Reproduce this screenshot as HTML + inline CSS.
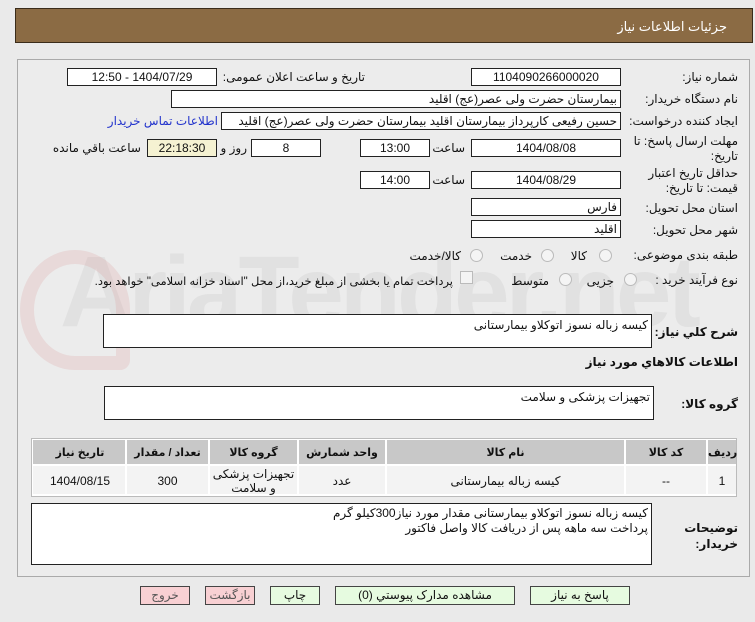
<!DOCTYPE html>
<html><head><meta charset="utf-8"><style>
body{margin:0;width:755px;height:622px;background:#eaeaea;font-family:"Liberation Sans","DejaVu Sans",sans-serif;font-size:12px;color:#111;position:relative;overflow:hidden}
.a{position:absolute}
.box{position:absolute;background:#fff;border:1px solid #222;box-sizing:border-box;height:18px;line-height:16px;text-align:center;direction:rtl;white-space:nowrap;overflow:hidden}
.r{text-align:right;padding-right:3px}
.l{position:absolute;direction:rtl;white-space:nowrap;text-align:right}
.rad{position:absolute;width:11px;height:11px;border:1px solid #bbb;border-radius:50%;background:#f4f4f4}
.btn{position:absolute;height:19px;top:586px;border:1px solid #444;box-sizing:border-box;text-align:center;line-height:17px;direction:rtl}
.g{background:#e6fbe0}.p{background:#f8d0d3;color:#555}
</style></head><body>
<div class="a" style="left:15px;top:8px;width:738px;height:35px;background:#8b6b44;border:1px solid #3a2c1a;box-sizing:border-box"></div>
<div class="l" style="right:28px;top:19px;color:#fff;font-size:13px">جزئیات اطلاعات نیاز</div>
<div class="a" style="left:17px;top:59px;width:733px;height:518px;border:1px solid #aaa;box-sizing:border-box;background:#ececec"></div>
<div class="a" style="left:60px;top:235px;font-size:100px;font-weight:bold;color:rgba(180,180,180,0.18);letter-spacing:-4px">AriaTender.net</div>
<div class="a" style="left:20px;top:250px;width:110px;height:120px;border:14px solid rgba(220,150,150,0.22);border-radius:50% 50% 10px 50%;box-sizing:border-box"></div>

<div class="l" style="right:17px;top:70px">شماره نیاز:</div>
<div class="box" style="left:471px;top:68px;width:150px">1104090266000020</div>
<div class="l" style="right:390px;top:70px">تاریخ و ساعت اعلان عمومی:</div>
<div class="box" style="left:67px;top:68px;width:150px">1404/07/29 - 12:50</div>

<div class="l" style="right:17px;top:92px">نام دستگاه خریدار:</div>
<div class="box r" style="left:171px;top:90px;width:450px">بیمارستان حضرت ولی عصر(عج) اقلید</div>

<div class="l" style="right:17px;top:114px">ایجاد کننده درخواست:</div>
<div class="box r" style="left:221px;top:112px;width:400px">حسین رفیعی کارپرداز بیمارستان اقلید بیمارستان حضرت ولی عصر(عج) اقلید</div>
<div class="l" style="right:537px;top:114px;color:#2233cc">اطلاعات تماس خریدار</div>

<div class="l" style="right:17px;top:134px;line-height:15px">مهلت ارسال پاسخ: تا<br>تاریخ:</div>
<div class="box" style="left:471px;top:139px;width:150px">1404/08/08</div>
<div class="l" style="right:290px;top:141px">ساعت</div>
<div class="box" style="left:360px;top:139px;width:70px">13:00</div>
<div class="box" style="left:251px;top:139px;width:70px">8</div>
<div class="l" style="right:508px;top:141px">روز و</div>
<div class="box" style="left:147px;top:139px;width:70px;background:#f5f2d2">22:18:30</div>
<div class="l" style="right:614px;top:141px">ساعت باقي مانده</div>

<div class="l" style="right:17px;top:166px;line-height:15px">حداقل تاریخ اعتبار<br>قیمت: تا تاریخ:</div>
<div class="box" style="left:471px;top:171px;width:150px">1404/08/29</div>
<div class="l" style="right:290px;top:173px">ساعت</div>
<div class="box" style="left:360px;top:171px;width:70px">14:00</div>

<div class="l" style="right:17px;top:201px">استان محل تحویل:</div>
<div class="box r" style="left:471px;top:198px;width:150px">فارس</div>
<div class="l" style="right:17px;top:223px">شهر محل تحویل:</div>
<div class="box r" style="left:471px;top:220px;width:150px">اقلید</div>

<div class="l" style="right:17px;top:248px">طبقه بندی موضوعی:</div>
<div class="rad" style="left:599px;top:249px"></div><div class="l" style="right:168px;top:249px">کالا</div>
<div class="rad" style="left:541px;top:249px"></div><div class="l" style="right:223px;top:249px">خدمت</div>
<div class="rad" style="left:470px;top:249px"></div><div class="l" style="right:294px;top:249px">کالا/خدمت</div>

<div class="l" style="right:17px;top:273px">نوع فرآیند خرید :</div>
<div class="rad" style="left:624px;top:273px"></div><div class="l" style="right:141px;top:274px">جزیی</div>
<div class="rad" style="left:559px;top:273px"></div><div class="l" style="right:206px;top:274px">متوسط</div>
<div class="a" style="left:460px;top:271px;width:11px;height:11px;border:1px solid #bbb;background:#f4f4f4"></div>
<div class="l" style="right:302px;top:274px;font-size:11.5px">پرداخت تمام یا بخشی از مبلغ خرید،از محل "اسناد خزانه اسلامی" خواهد بود.</div>

<div class="l" style="right:17px;top:325px;font-weight:bold">شرح کلي نیاز:</div>
<div class="box r" style="left:103px;top:314px;width:549px;height:34px;text-align:right;padding-top:2px">کیسه زباله نسوز اتوکلاو بیمارستانی</div>
<div class="l" style="right:17px;top:355px;font-weight:bold">اطلاعات کالاهاي مورد نیاز</div>
<div class="l" style="right:17px;top:397px;font-weight:bold">گروه کالا:</div>
<div class="box r" style="left:104px;top:386px;width:550px;height:34px;text-align:right;padding-top:2px">تجهیزات پزشکی و سلامت</div>

<div class="a" style="left:31px;top:438px;width:706px;height:59px;border:1px solid #bbb;box-sizing:border-box;background:#fff"></div>
<div class="a" style="left:33px;top:440px;width:703px;height:25px;background:#c8c8c8"></div>
<div class="a" style="left:33px;top:466px;width:703px;height:28px;background:#f3f3f3"></div>
<div class="a" style="left:706px;top:440px;width:2px;height:55px;background:#fff"></div>
<div class="a" style="left:624px;top:440px;width:2px;height:55px;background:#fff"></div>
<div class="a" style="left:385px;top:440px;width:2px;height:55px;background:#fff"></div>
<div class="a" style="left:297px;top:440px;width:2px;height:55px;background:#fff"></div>
<div class="a" style="left:208px;top:440px;width:2px;height:55px;background:#fff"></div>
<div class="a" style="left:125px;top:440px;width:2px;height:55px;background:#fff"></div>
<div class="a" style="left:33px;top:464px;width:703px;height:2px;background:#fff"></div>
<div class="a" style="font-weight:bold;top:446px;left:708px;width:28px;text-align:center;font-size:11px">ردیف</div>
<div class="a" style="font-weight:bold;top:446px;left:626px;width:80px;text-align:center;font-size:11px">کد کالا</div>
<div class="a" style="font-weight:bold;top:446px;left:387px;width:237px;text-align:center;font-size:11px">نام کالا</div>
<div class="a" style="font-weight:bold;top:446px;left:299px;width:86px;text-align:center;font-size:11px">واحد شمارش</div>
<div class="a" style="font-weight:bold;top:446px;left:210px;width:87px;text-align:center;font-size:11px">گروه کالا</div>
<div class="a" style="font-weight:bold;top:446px;left:127px;width:81px;text-align:center;font-size:11px">تعداد / مقدار</div>
<div class="a" style="font-weight:bold;top:446px;left:35px;width:90px;text-align:center;font-size:11px">تاریخ نیاز</div>
<div class="a" style="top:474px;left:708px;width:28px;text-align:center">1</div>
<div class="a" style="top:474px;left:626px;width:80px;text-align:center">--</div>
<div class="a" style="top:474px;left:387px;width:237px;text-align:center;direction:rtl">کیسه زباله بیمارستانی</div>
<div class="a" style="top:474px;left:299px;width:86px;text-align:center">عدد</div>
<div class="a" style="top:467px;left:210px;width:87px;text-align:center;direction:rtl;font-size:12px;line-height:14px">تجهیزات پزشکی و سلامت</div>
<div class="a" style="top:474px;left:127px;width:81px;text-align:center">300</div>
<div class="a" style="top:474px;left:35px;width:90px;text-align:center">1404/08/15</div>

<div class="l" style="right:17px;top:520px;font-weight:bold;line-height:16px">توضیحات<br>خریدار:</div>
<div class="box r" style="left:31px;top:503px;width:621px;height:62px;text-align:right;white-space:normal;line-height:15px;padding-top:2px">کیسه زباله نسوز اتوکلاو بیمارستانی مقدار مورد نیاز300کیلو گرم<br>پرداخت سه ماهه پس از دریافت کالا واصل فاکتور</div>

<div class="btn g" style="left:530px;width:100px">پاسخ به نیاز</div>
<div class="btn g" style="left:335px;width:180px">مشاهده مدارک پیوستي (0)</div>
<div class="btn g" style="left:270px;width:50px">چاپ</div>
<div class="btn p" style="left:205px;width:50px">بازگشت</div>
<div class="btn p" style="left:140px;width:50px">خروج</div>
</body></html>
